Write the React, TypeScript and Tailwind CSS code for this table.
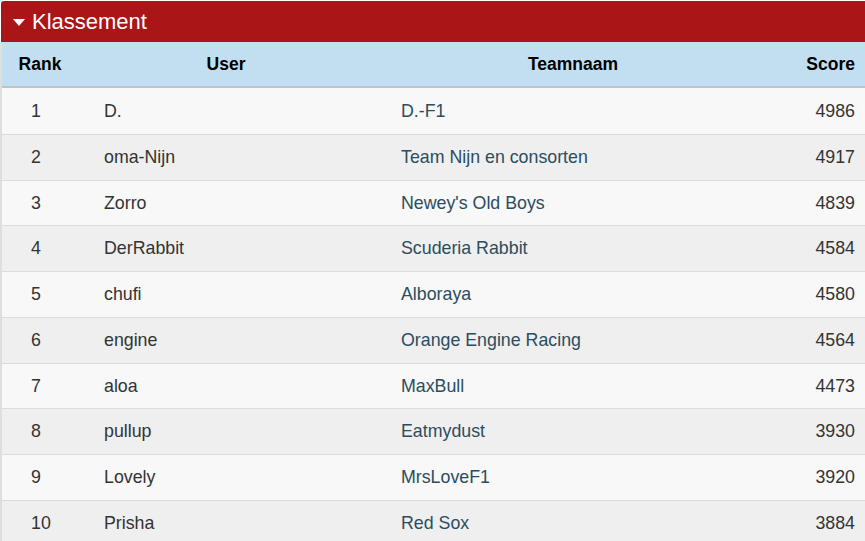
import React from "react";

const rows: [number, string, string, number][] = [
  [1, "D.", "D.-F1", 4986],
  [2, "oma-Nijn", "Team Nijn en consorten", 4917],
  [3, "Zorro", "Newey's Old Boys", 4839],
  [4, "DerRabbit", "Scuderia Rabbit", 4584],
  [5, "chufi", "Alboraya", 4580],
  [6, "engine", "Orange Engine Racing", 4564],
  [7, "aloa", "MaxBull", 4473],
  [8, "pullup", "Eatmydust", 3930],
  [9, "Lovely", "MrsLoveF1", 3920],
  [10, "Prisha", "Red Sox", 3884],
];

export default function App() {
  return (
    <div
      className="w-[865px] h-[541px] overflow-hidden bg-white"
      style={{ fontFamily: '"Liberation Sans", Arial, sans-serif' }}
    >
      <div className="ml-[1px] mt-[1px] h-[41px] bg-[#aa1517] rounded-tl-[3px] flex items-center pl-[12px] text-white">
        <svg width="12" height="7" viewBox="0 0 12 7" className="mr-[7px] mt-[1px]">
          <path d="M0 0 L12 0 L6 7 Z" fill="white" />
        </svg>
        <span className="text-[22px] leading-none">Klassement</span>
      </div>
      <div className="border-l-2 border-[#dedede]">
        <div className="grid grid-cols-[76px_296px_398px_1fr] h-[46px] items-center bg-[#c2dff1] border-b-2 border-[#b9c4cc] text-[17.5px] font-bold text-black">
          <div className="text-center">Rank</div>
          <div className="text-center">User</div>
          <div className="text-center">Teamnaam</div>
          <div className="text-right pr-[10px]">Score</div>
        </div>
        {rows.map(([rank, user, team, score], i) => (
          <div
            key={rank}
            className={`grid grid-cols-[76px_296px_398px_1fr] h-[45.78px] items-center text-[17.8px] ${
              i > 0 ? "border-t border-[#dcdcdc]" : ""
            } ${i % 2 === 0 ? "bg-[#f8f8f8]" : "bg-[#efefef]"}`}
          >
            <div className="pl-[29px] text-[#333]">{rank}</div>
            <div className="pl-[26px] text-[#333]">{user}</div>
            <div className="pl-[27px] text-[#2b4d5e]">{team}</div>
            <div className="text-right pr-[10px] text-[#333]">{score}</div>
          </div>
        ))}
      </div>
    </div>
  );
}
